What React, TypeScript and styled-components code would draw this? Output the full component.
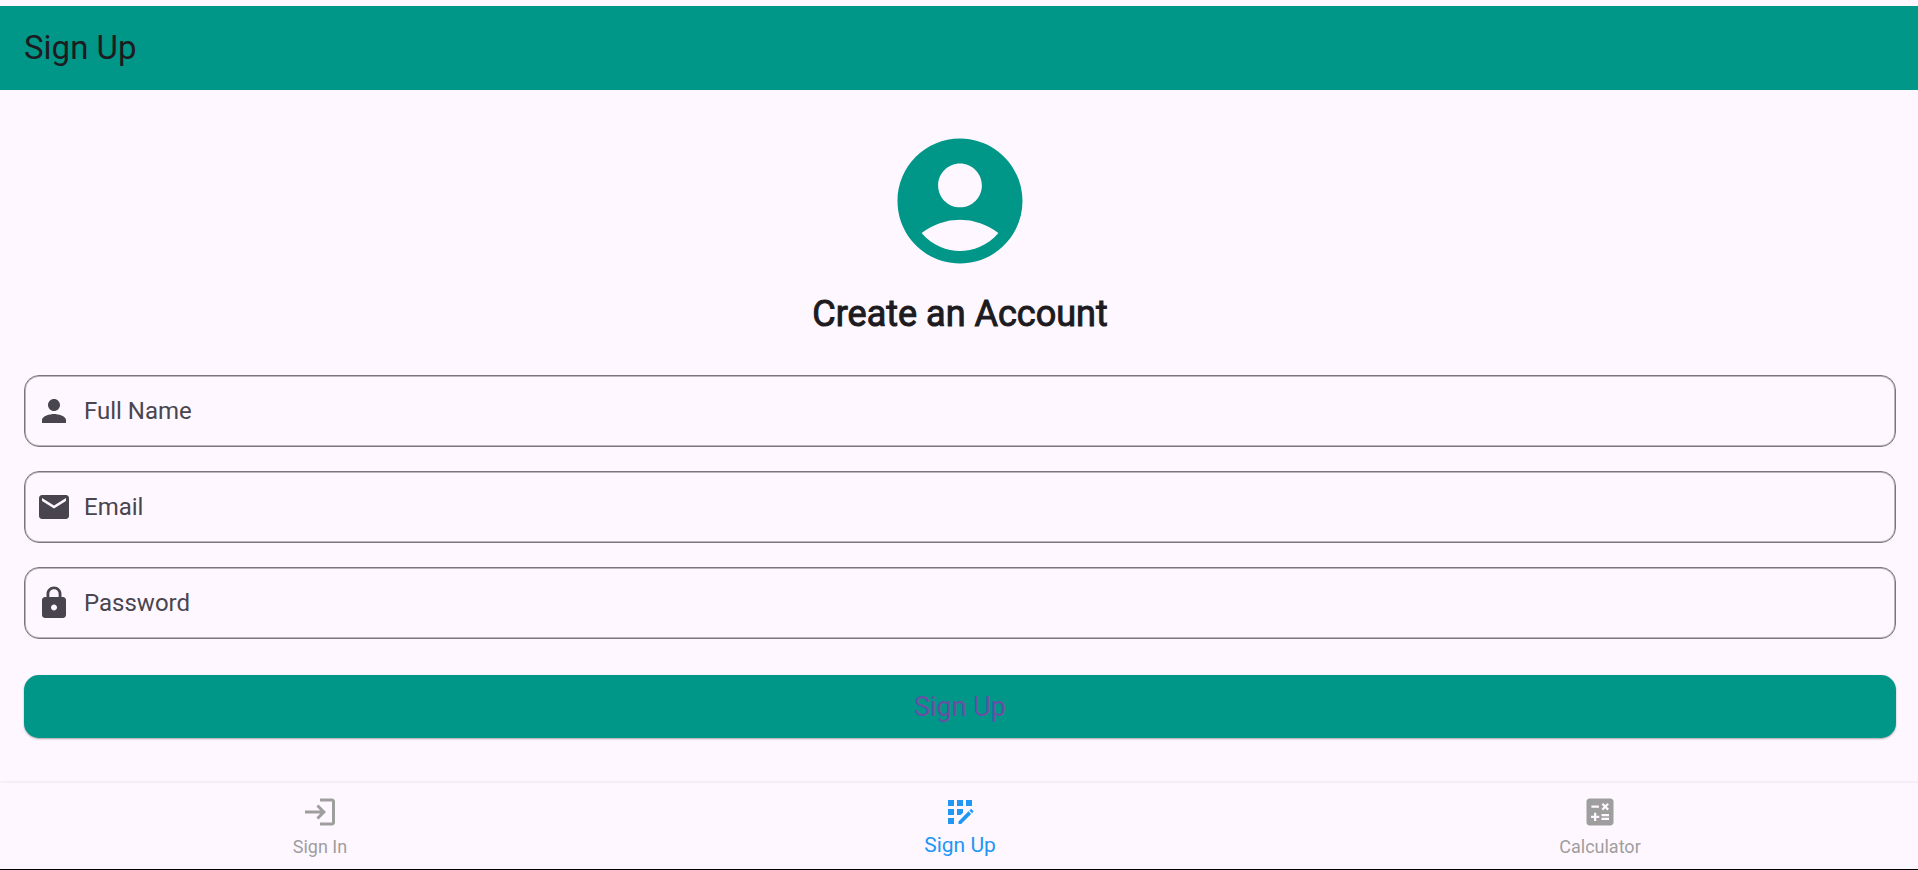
import React from "react";
import styled, { createGlobalStyle } from "styled-components";
import {
  MdAccountCircle,
  MdAppRegistration,
  MdCalculate,
  MdEmail,
  MdLock,
  MdLogin,
  MdPerson,
} from "react-icons/md";
import type { IconType } from "react-icons";

const color = {
  surface: "#fef7ff",
  teal: "#009688",
  ink: "#1d1b20",
  muted: "#49454f",
  outline: "#79747e",
  outlineSoft: "rgba(121, 116, 126, 0.5)",
  purple: "#6750a4",
  blue: "#2196f3",
  grey: "#9e9e9e",
};

const GlobalStyle = createGlobalStyle`
  * { box-sizing: border-box; }
  body {
    margin: 0;
    overflow-x: hidden;
    background: ${color.surface};
    color: ${color.ink};
    font-family: Roboto, "Liberation Sans", sans-serif;
  }
`;

const Page = styled.div`
  display: flex;
  flex-direction: column;
  min-height: 100vh;
  margin-right: -2px;
  padding-top: 6px;
`;

const AppBar = styled.header`
  display: flex;
  align-items: center;
  height: 84px;
  padding: 0 24px;
  background: ${color.teal};
`;

const Title = styled.h1`
  margin: 0;
  font-size: 33px;
  line-height: 42px;
  font-weight: 400;
`;

const Form = styled.form`
  display: flex;
  flex: 1;
  flex-direction: column;
  padding: 36px 24px;
`;

const Avatar = styled(MdAccountCircle)`
  align-self: center;
  width: 150px;
  height: 150px;
  color: ${color.teal};
`;

const Heading = styled.h2`
  margin: 16px 0 38px;
  font-size: 36px;
  line-height: 45px;
  font-weight: 400;
  text-align: center;
  -webkit-text-stroke: 1px ${color.ink};
`;

const Fields = styled.div`
  display: grid;
  gap: 24px;
`;

const Field = styled.label`
  display: flex;
  align-items: center;
  height: 72px;
  padding: 0 12px 0 11px;
  border: 1px solid ${color.outline};
  border-radius: 15px;
  box-shadow: inset 0 0 0 1px ${color.outlineSoft};
  color: ${color.muted};
  font-size: 24px;
  line-height: 36px;
  cursor: text;

  svg {
    width: 36px;
    height: 36px;
    margin-right: 12px;
  }

  &:focus-within {
    border-color: ${color.purple};
  }
`;

const Input = styled.input`
  flex: 1;
  min-width: 0;
  margin-left: 12px;
  border: 0;
  outline: 0;
  background: transparent;
  color: ${color.ink};
  font: inherit;
`;

const SubmitButton = styled.button`
  height: 63px;
  margin-top: 36px;
  border: 0;
  border-radius: 15px;
  background: ${color.teal};
  box-shadow: 0 1px 2px rgba(0, 0, 0, 0.35);
  color: ${color.purple};
  font-family: inherit;
  font-size: 27px;
  line-height: 36px;
  cursor: pointer;
`;

const NavBar = styled.nav`
  display: grid;
  grid-template-columns: repeat(3, 1fr);
  height: 87px;
  border-bottom: 1px solid #000;
  background: ${color.surface};
  box-shadow: 0 -1px 3px rgba(0, 0, 0, 0.07);
`;

const NavLink = styled.a<{ $active: boolean }>`
  display: flex;
  flex-direction: column;
  align-items: center;
  padding-top: 11px;
  color: ${({ $active }) => ($active ? color.blue : color.grey)};
  font-size: ${({ $active }) => ($active ? 21 : 18)}px;
  line-height: ${({ $active }) => ($active ? 30 : 34)}px;
  text-decoration: none;

  svg {
    width: 36px;
    height: 36px;
  }
`;

const fields: { id: string; label: string; type: string; icon: IconType }[] = [
  { id: "name", label: "Full Name", type: "text", icon: MdPerson },
  { id: "email", label: "Email", type: "email", icon: MdEmail },
  { id: "password", label: "Password", type: "password", icon: MdLock },
];

const destinations: { label: string; href: string; icon: IconType }[] = [
  { label: "Sign In", href: "#sign-in", icon: MdLogin },
  { label: "Sign Up", href: "#sign-up", icon: MdAppRegistration },
  { label: "Calculator", href: "#calculator", icon: MdCalculate },
];

export default function App() {
  return (
    <>
      <GlobalStyle />
      <Page>
        <AppBar>
          <Title>Sign Up</Title>
        </AppBar>
        <Form onSubmit={(event) => event.preventDefault()}>
          <Avatar aria-hidden />
          <Heading>Create an Account</Heading>
          <Fields>
            {fields.map(({ id, label, type, icon: Icon }) => (
              <Field key={id} htmlFor={id}>
                <Icon aria-hidden />
                {label}
                <Input id={id} name={id} type={type} />
              </Field>
            ))}
          </Fields>
          <SubmitButton type="submit">Sign Up</SubmitButton>
        </Form>
        <NavBar>
          {destinations.map(({ label, href, icon: Icon }) => (
            <NavLink key={label} href={href} $active={label === "Sign Up"}>
              <Icon aria-hidden />
              {label}
            </NavLink>
          ))}
        </NavBar>
      </Page>
    </>
  );
}
